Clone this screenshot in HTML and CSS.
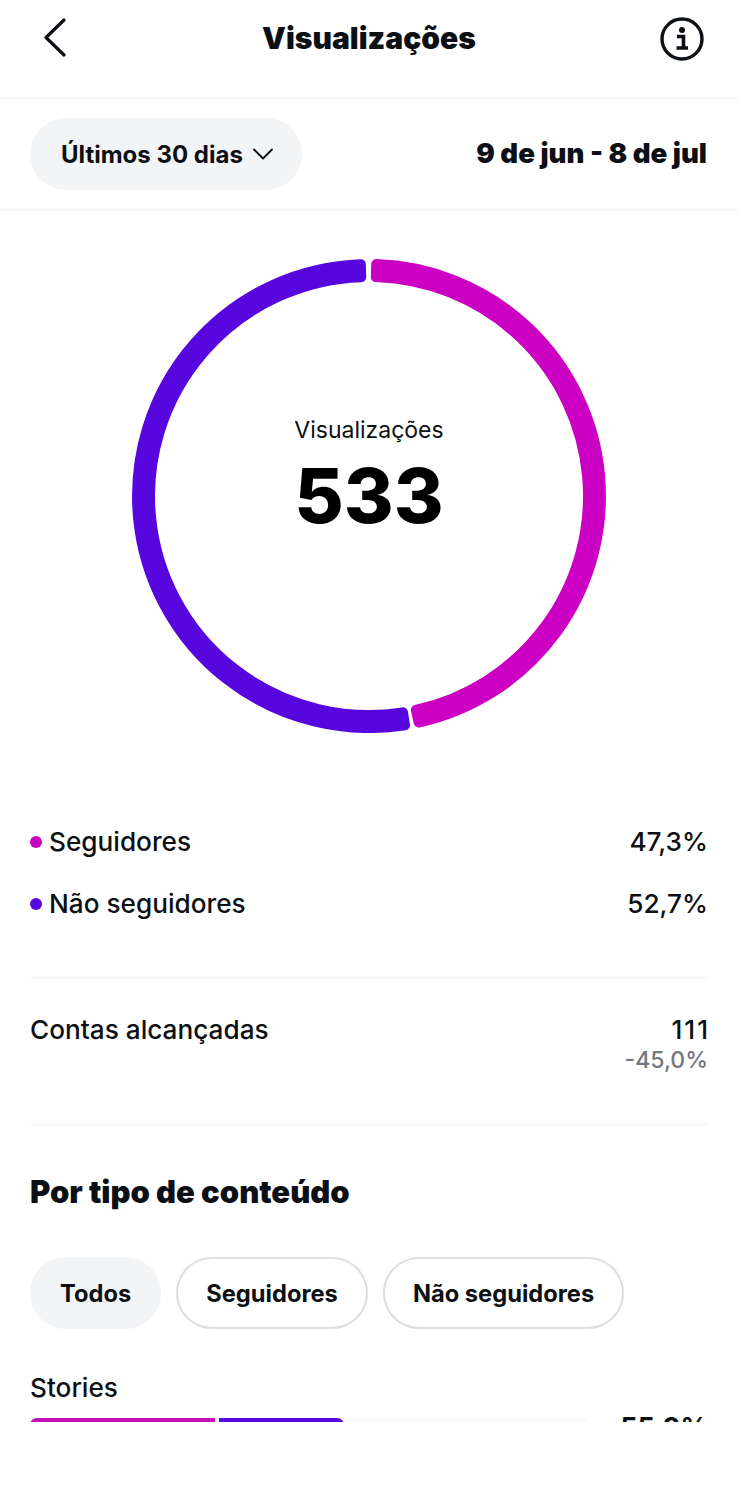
FILE: index.html
```html
<!DOCTYPE html>
<html lang="pt">
<head>
<meta charset="utf-8">
<title>Visualizações</title>
<link rel="stylesheet" href="styles.css">
</head>
<body>
<div class="screen">
  <header class="topbar">
    <svg class="back" width="24" height="40" viewBox="0 0 24 40"><path d="M21 2 L3 19.5 L21 37" fill="none" stroke="#0c1014" stroke-width="3.2" stroke-linecap="round" stroke-linejoin="round"/></svg>
    <h1 class="title">Visualizações</h1>
    <svg class="info" width="44" height="44" viewBox="0 0 44 44"><circle cx="22" cy="22" r="20" fill="none" stroke="#0c1014" stroke-width="3.4"/><circle cx="22" cy="13" r="3" fill="#0c1014"/><path d="M17 19.5H23.5V30M16.5 31H28" fill="none" stroke="#0c1014" stroke-width="3.6"/></svg>
  </header>
  <section class="filterbar">
    <div class="pill">
      <span>Últimos 30 dias</span>
      <svg width="20" height="12" viewBox="0 0 20 12"><path d="M1 1.5 L10 10.5 L19 1.5" fill="none" stroke="#0c1014" stroke-width="1.8" stroke-linecap="round" stroke-linejoin="round"/></svg>
    </div>
    <div class="range">9 de jun - 8 de jul</div>
  </section>
  <main class="content">
    <div class="donut">
      <svg class="ring" width="474" height="474" viewBox="-237 -237 474 474">
        <path class="seg-a" d="M7.21 -231.89 A232 232 0 0 1 49.7 226.6 L46.91 213.92 A219 219 0 0 0 6.81 -218.89 Z"/>
        <path class="seg-b" d="M36 229.2 A232 232 0 1 1 -8.21 -231.85 L-7.75 -218.86 A219 219 0 1 0 33.99 216.35 Z"/>
      </svg>
      <div class="donut-label">
        <div class="donut-name">Visualizações</div>
        <div class="donut-value">533</div>
      </div>
    </div>
    <div class="legend">
      <div class="row"><span class="key"><i class="dot dot-a"></i>Seguidores</span><span>47,3%</span></div>
      <div class="row"><span class="key"><i class="dot dot-b"></i>Não seguidores</span><span>52,7%</span></div>
    </div>
    <div class="reach">
      <span>Contas alcançadas</span>
      <div class="reach-num"><div class="reach-total">111</div><div class="delta">-45,0%</div></div>
    </div>
    <h2 class="section">Por tipo de conteúdo</h2>
    <div class="tabs">
      <div class="tab tab-on">Todos</div>
      <div class="tab">Seguidores</div>
      <div class="tab">Não seguidores</div>
    </div>
    <div class="kind">Stories</div>
    <div class="bar-row">
      <div class="track">
        <div class="bar bar-a"></div>
        <div class="bar bar-b"></div>
      </div>
      <div class="pct">55,0%</div>
    </div>
  </main>
</div>
</body>
</html>
```
FILE: styles.css
```css
* { box-sizing: border-box; }
html, body { margin: 0; padding: 0; background: #fff; }
body { font-family: Inter, "Liberation Sans", sans-serif; color: #0c1014; }
.screen { width: 738px; height: 1486px; overflow: hidden; }
.topbar { height: 99px; border-bottom: 1px solid #f0f1f3; display: flex; align-items: flex-start; justify-content: space-between; padding: 18px 34px 0 43px; position: relative; }
.title { margin: 0; font-size: 30px; font-weight: 900; line-height: 40px; position: absolute; left: 0; right: 0; text-align: center; top: 18px; }
.info { margin-top: -1px; }
.filterbar { height: 111px; border-bottom: 1px solid #f0f1f3; display: flex; align-items: center; justify-content: space-between; padding: 0 31px 0 30px; }
.pill { width: 272px; height: 72px; border-radius: 36px; background: #f3f4f6; display: flex; align-items: center; gap: 10px; padding-left: 31px; font-size: 24px; font-weight: 700; }
.range { font-size: 27.6px; font-weight: 900; line-height: 40px; padding-bottom: 2px; }
.content { height: 1212px; overflow: hidden; padding: 49px 30px 0 30px; }
.donut { position: relative; width: 474px; height: 474px; margin-left: 102px; }
.ring { display: block; }
.seg-a { fill: #cc00c2; stroke: #cc00c2; stroke-width: 10; stroke-linejoin: round; }
.seg-b { fill: #5706dd; stroke: #5706dd; stroke-width: 10; stroke-linejoin: round; }
.donut-label { position: absolute; left: 0; right: 0; top: 156px; text-align: center; }
.donut-name { font-size: 23px; line-height: 30px; }
.donut-value { font-size: 76px; font-weight: 800; line-height: 90px; margin-top: 5px; color: #000; }
.legend { margin-top: 89px; display: flex; flex-direction: column; gap: 22px; }
.row { display: flex; justify-content: space-between; font-size: 26.2px; font-weight: 500; line-height: 40px; }
.key { display: flex; align-items: center; gap: 7px; }
.dot { width: 12px; height: 12px; border-radius: 50%; }
.dot-a { background: #cc00c2; }
.dot-b { background: #5706dd; }
.reach { margin-top: 53px; border-top: 1px solid #f0f1f3; border-bottom: 1px solid #f0f1f3; height: 148px; padding-top: 32px; display: flex; justify-content: space-between; font-size: 26.2px; font-weight: 500; line-height: 40px; }
.reach-num { text-align: right; }
.reach-total { letter-spacing: 2px; margin-right: -2px; }
.delta { color: #737880; font-size: 23px; line-height: 20px; margin-top: 0; }
.section { margin: 47px 0 0; font-size: 31px; font-weight: 900; line-height: 40px; }
.tabs { display: flex; gap: 15px; margin-top: 45px; }
.tab { height: 72px; border-radius: 36px; border: 2px solid #dbdde0; padding: 0 28px; display: flex; align-items: center; font-size: 23.7px; font-weight: 700; }
.tab-on { background: #f3f4f6; border-color: #f3f4f6; }
.kind { margin-top: 39px; font-size: 26.2px; font-weight: 500; line-height: 40px; }
.bar-row { display: flex; justify-content: space-between; align-items: flex-start; margin-top: 10px; position: relative; }
.track { width: 559px; height: 14px; border-radius: 7px; background: #f9f9fb; display: flex; gap: 4px; overflow: hidden; }
.bar { height: 14px; }
.bar-a { width: 185px; background: #c210b4; }
.bar-b { width: 125px; background: #5706dd; border-radius: 0 7px 7px 0; }
.pct { font-size: 27px; font-weight: 700; line-height: 32px; margin-top: -6px; }
```
